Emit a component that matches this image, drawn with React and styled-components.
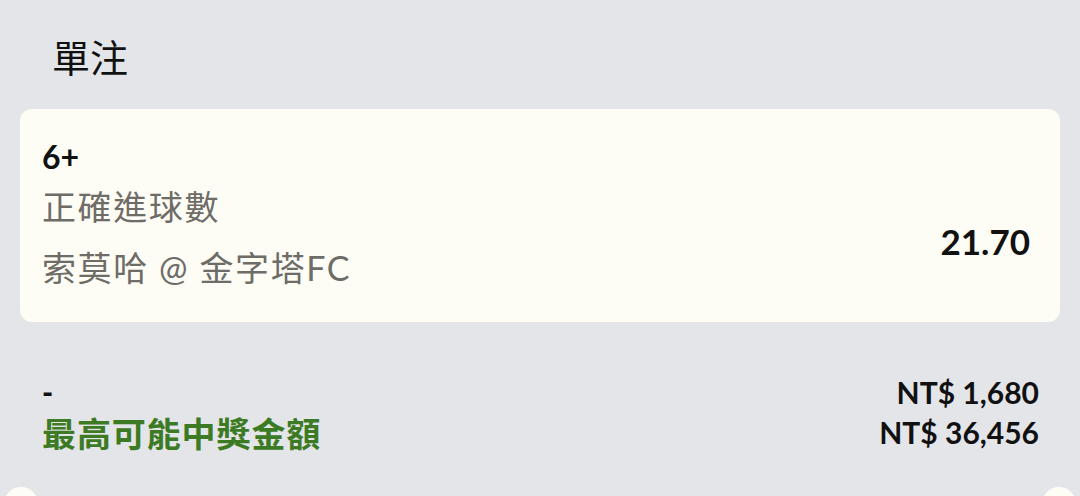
import React from 'react';
import styled, { createGlobalStyle } from 'styled-components';

const GlobalStyle = createGlobalStyle`
  html, body {
    margin: 0;
    padding: 0;
    background: #e4e5e9;
  }
  body {
    font-family: Lato, "Noto Sans CJK TC", sans-serif;
  }
`;

const Page = styled.div`
  width: 1080px;
  height: 496px;
  overflow: hidden;
  background: #e4e5e9;
`;

const Title = styled.h1`
  margin: 0;
  padding: 2px 0 0 52px;
  height: 109px;
  box-sizing: border-box;
  display: flex;
  align-items: center;
  font-size: 38px;
  font-weight: 400;
  color: #111;
  font-family: "Noto Sans CJK TC", sans-serif;
`;

const Card = styled.div`
  margin: 0 20px;
  height: 213px;
  box-sizing: border-box;
  background: #fefdf5;
  border-radius: 12px;
  padding: 28px 30px 0 22px;
  display: grid;
  grid-template-columns: 1fr auto;
  grid-template-rows: 40px 60px 62px;
`;

const Selection = styled.div`
  grid-column: 1;
  font-size: 32px;
  font-weight: 700;
  color: #111;
  line-height: 40px;
`;

const Info = styled.div`
  grid-column: 1;
  font-size: 34px;
  color: #6e6c67;
  line-height: ${p => p.$lh}px;
  letter-spacing: 1.6px;
  white-space: nowrap;
`;

const Odds = styled.div`
  grid-column: 2;
  grid-row: 2 / span 2;
  align-self: center;
  font-size: 35px;
  font-weight: 700;
  color: #111;
  padding-top: 6px;
`;

const Summary = styled.div`
  margin-top: 50px;
  padding: 0 41px 0 42px;
  display: grid;
  grid-template-columns: 1fr auto;
  grid-auto-rows: 40px;
  align-items: center;
`;

const Dash = styled.div`
  font-size: 30px;
  font-weight: 900;
  color: #111;
`;

const Label = styled.div`
  font-size: 34px;
  font-weight: 700;
  color: #3c7b24;
  letter-spacing: 0.9px;
  font-family: "Noto Sans CJK TC", sans-serif;
`;

const Amount = styled.div`
  text-align: right;
  font-size: 30px;
  font-weight: 700;
  color: #111;
`;

const Footer = styled.div`
  margin-top: 35px;
  padding: 0 4px;
  display: flex;
  justify-content: space-between;
`;

const Dot = styled.div`
  width: 34px;
  height: 34px;
  border-radius: 50%;
  background: #fefdf5;
`;

export default function App() {
  return (
    <Page>
      <GlobalStyle />
      <Title>單注</Title>
      <Card>
        <Selection>6+</Selection>
        <Info $lh={60}>正確進球數</Info>
        <Odds>21.70</Odds>
        <Info $lh={62}>索莫哈 @ 金字塔FC</Info>
      </Card>
      <Summary>
        <Dash>-</Dash>
        <Amount>NT$ 1,680</Amount>
        <Label>最高可能中獎金額</Label>
        <Amount>NT$ 36,456</Amount>
      </Summary>
      <Footer>
        <Dot />
        <Dot />
      </Footer>
    </Page>
  );
}
